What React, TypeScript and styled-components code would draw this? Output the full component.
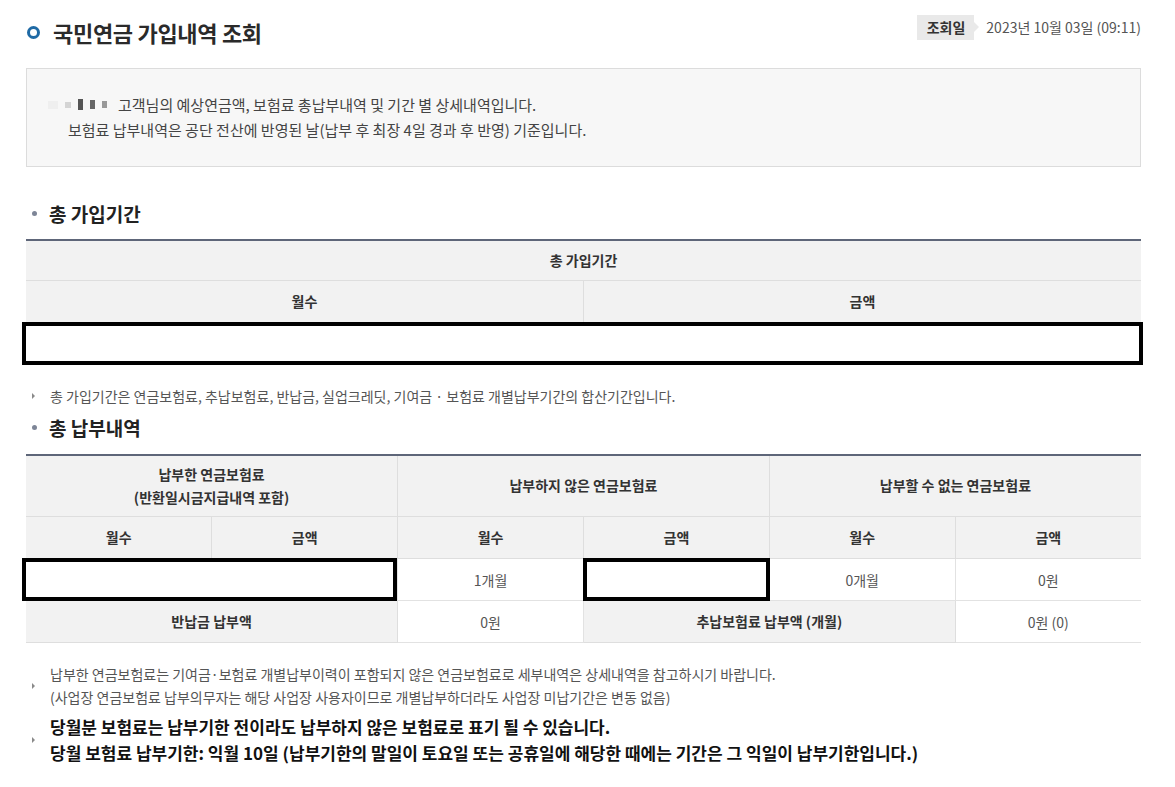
import React from "react";
import styled, { createGlobalStyle } from "styled-components";

const Global = createGlobalStyle`
  html, body { margin: 0; padding: 0; background: #fff; }
  body { font-family: "Noto Sans CJK KR", "Noto Sans", sans-serif; color: #333; }
  * { box-sizing: border-box; }
`;

const Page = styled.div`
  width: 1175px;
  padding: 0 34px 30px 26px;
`;

const TopBar = styled.div`
  display: flex;
  align-items: center;
  justify-content: space-between;
  height: 62px;
  padding-top: 2px;
`;

const Title = styled.h1`
  display: flex;
  align-items: center;
  gap: 13px;
  margin: 0;
  font-size: 22px;
  font-weight: 700;
  color: #2a2a2a;
  letter-spacing: -0.3px;
`;

const Ring = styled.span`
  width: 13px;
  height: 13px;
  border-radius: 50%;
  border: 3.5px solid #1f6aa5;
  margin-left: 1px;
`;

const Stamp = styled.div`
  display: flex;
  align-items: center;
  gap: 12px;
  margin-top: -10px;
`;

const Tag = styled.span`
  position: relative;
  background: #e9e9e9;
  height: 25px;
  padding: 0 9px 0 10px;
  display: flex;
  align-items: center;
  font-size: 14px;
  font-weight: 700;
  color: #333;
  &::after {
    content: "";
    position: absolute;
    right: -5px;
    top: 7px;
    border-left: 5px solid #e9e9e9;
    border-top: 5px solid transparent;
    border-bottom: 5px solid transparent;
  }
`;

const DateText = styled.span`
  font-size: 14px;
  color: #555;
`;

const InfoBox = styled.div`
  margin-top: 6px;
  border: 1px solid #dcdcdc;
  background: #f7f7f7;
  height: 99px;
  padding: 23px 0 0 21px;
  font-size: 15px;
  line-height: 25px;
  color: #444;
`;

const InfoLine = styled.div<{ $indent?: number }>`
  display: flex;
  align-items: center;
  padding-left: ${(p) => p.$indent ?? 0}px;
  white-space: nowrap;
`;

const Mosaic = styled.span`
  display: inline-flex;
  align-items: center;
  gap: 7px;
  width: 70px;
`;

const Pix = styled.span<{ $c: string; $h: number; $w: number }>`
  display: inline-block;
  width: ${(p) => p.$w}px;
  height: ${(p) => p.$h}px;
  background: ${(p) => p.$c};
`;

const SectionTitle = styled.h2<{ $top: number }>`
  display: flex;
  align-items: center;
  gap: 12px;
  margin: ${(p) => p.$top}px 0 0 0;
  height: 30px;
  font-size: 19px;
  font-weight: 700;
  color: #222;
  &::before {
    content: "";
    width: 5px;
    height: 5px;
    border-radius: 50%;
    background: #7d8597;
    margin-left: 6px;
  }
`;

const Table = styled.table<{ $top: number }>`
  width: 100%;
  margin-top: ${(p) => p.$top}px;
  border-collapse: collapse;
  table-layout: fixed;
  border-top: 2px solid #5e6679;
  border-bottom: 1px solid #b5b5b5;
  font-size: 14px;
`;

const Th = styled.th<{ $h?: number }>`
  background: #f2f2f2;
  border: 1px solid #dedede;
  border-top: none;
  height: ${(p) => p.$h ?? 42}px;
  font-weight: 700;
  color: #333;
  line-height: 23px;
  text-align: center;
  padding: 0;
  &:first-child { border-left: none; }
  &:last-child { border-right: none; }
`;

const Td = styled.td`
  position: relative;
  border: 1px solid #e2e2e2;
  height: 42px;
  text-align: center;
  color: #555;
  padding: 0;
  background: #fff;
  &:first-child { border-left: none; }
  &:last-child { border-right: none; }
`;

const Redact = styled.span<{ $l: number; $r: number }>`
  position: absolute;
  left: ${(p) => p.$l}px;
  right: ${(p) => p.$r}px;
  top: -1px;
  bottom: -1px;
  border: 4px solid #000;
  background: #fff;
`;

const Note = styled.ul<{ $top: number }>`
  list-style: none;
  margin: ${(p) => p.$top}px 0 0 0;
  padding: 0;
`;

const NoteItem = styled.li<{ $bold?: boolean }>`
  position: relative;
  padding-left: 24px;
  font-size: ${(p) => (p.$bold ? 17 : 14)}px;
  font-weight: ${(p) => (p.$bold ? 700 : 400)};
  line-height: ${(p) => (p.$bold ? 26 : 23)}px;
  color: ${(p) => (p.$bold ? "#111" : "#555")};
  margin-bottom: ${(p) => (p.$bold ? 0 : 5)}px;
  &::before {
    content: "";
    position: absolute;
    left: 6px;
    top: 50%;
    margin-top: -3px;
    border-left: 3px solid #8a8a8a;
    border-top: 3px solid transparent;
    border-bottom: 3px solid transparent;
  }
`;

export default function App() {
  return (
    <Page>
      <Global />
      <TopBar>
        <Title>
          <Ring />
          국민연금 가입내역 조회
        </Title>
        <Stamp>
          <Tag>조회일</Tag>
          <DateText>2023년 10월 03일 (09:11)</DateText>
        </Stamp>
      </TopBar>

      <InfoBox>
        <InfoLine>
          <Mosaic>
            <Pix $c="#efefef" $w={10} $h={8} />
            <Pix $c="#d4d4d4" $w={6} $h={6} />
            <Pix $c="#555" $w={5} $h={11} />
            <Pix $c="#666" $w={5} $h={9} />
            <Pix $c="#999" $w={5} $h={7} />
          </Mosaic>
          고객님의 예상연금액, 보험료 총납부내역 및 기간 별 상세내역입니다.
        </InfoLine>
        <InfoLine $indent={20}>보험료 납부내역은 공단 전산에 반영된 날(납부 후 최장 4일 경과 후 반영) 기준입니다.</InfoLine>
      </InfoBox>

      <SectionTitle $top={31}>총 가입기간</SectionTitle>
      <Table $top={11}>
        <colgroup>
          <col style={{ width: "50%" }} />
          <col style={{ width: "50%" }} />
        </colgroup>
        <tbody>
          <tr>
            <Th colSpan={2} $h={40}>총 가입기간</Th>
          </tr>
          <tr>
            <Th>월수</Th>
            <Th>금액</Th>
          </tr>
          <tr>
            <Td colSpan={2}>
              <Redact $l={-4} $r={-2} />
            </Td>
          </tr>
        </tbody>
      </Table>

      <Note $top={20}>
        <NoteItem>총 가입기간은 연금보험료, 추납보험료, 반납금, 실업크레딧, 기여금 · 보험료 개별납부기간의 합산기간입니다.</NoteItem>
      </Note>

      <SectionTitle $top={0}>총 납부내역</SectionTitle>
      <Table $top={11}>
        <colgroup>
          {[0, 1, 2, 3, 4, 5].map((i) => (
            <col key={i} style={{ width: `${100 / 6}%` }} />
          ))}
        </colgroup>
        <tbody>
          <tr>
            <Th colSpan={2} $h={62}>
              납부한 연금보험료
              <br />
              (반환일시금지급내역 포함)
            </Th>
            <Th colSpan={2} $h={62}>납부하지 않은 연금보험료</Th>
            <Th colSpan={2} $h={62}>납부할 수 없는 연금보험료</Th>
          </tr>
          <tr>
            <Th>월수</Th>
            <Th>금액</Th>
            <Th>월수</Th>
            <Th>금액</Th>
            <Th>월수</Th>
            <Th>금액</Th>
          </tr>
          <tr>
            <Td colSpan={2}>
              <Redact $l={-4} $r={0} />
            </Td>
            <Td>1개월</Td>
            <Td>
              <Redact $l={-1} $r={-1} />
            </Td>
            <Td>0개월</Td>
            <Td>0원</Td>
          </tr>
          <tr>
            <Th colSpan={2}>반납금 납부액</Th>
            <Td>0원</Td>
            <Th colSpan={2}>추납보험료 납부액 (개월)</Th>
            <Td>0원 (0)</Td>
          </tr>
        </tbody>
      </Table>

      <Note $top={20}>
        <NoteItem>
          납부한 연금보험료는 기여금·보험료 개별납부이력이 포함되지 않은 연금보험료로 세부내역은 상세내역을 참고하시기 바랍니다.
          <br />
          (사업장 연금보험료 납부의무자는 해당 사업장 사용자이므로 개별납부하더라도 사업장 미납기간은 변동 없음)
        </NoteItem>
        <NoteItem $bold>
          당월분 보험료는 납부기한 전이라도 납부하지 않은 보험료로 표기 될 수 있습니다.
          <br />
          당월 보험료 납부기한: 익월 10일 (납부기한의 말일이 토요일 또는 공휴일에 해당한 때에는 기간은 그 익일이 납부기한입니다.)
        </NoteItem>
      </Note>
    </Page>
  );
}
